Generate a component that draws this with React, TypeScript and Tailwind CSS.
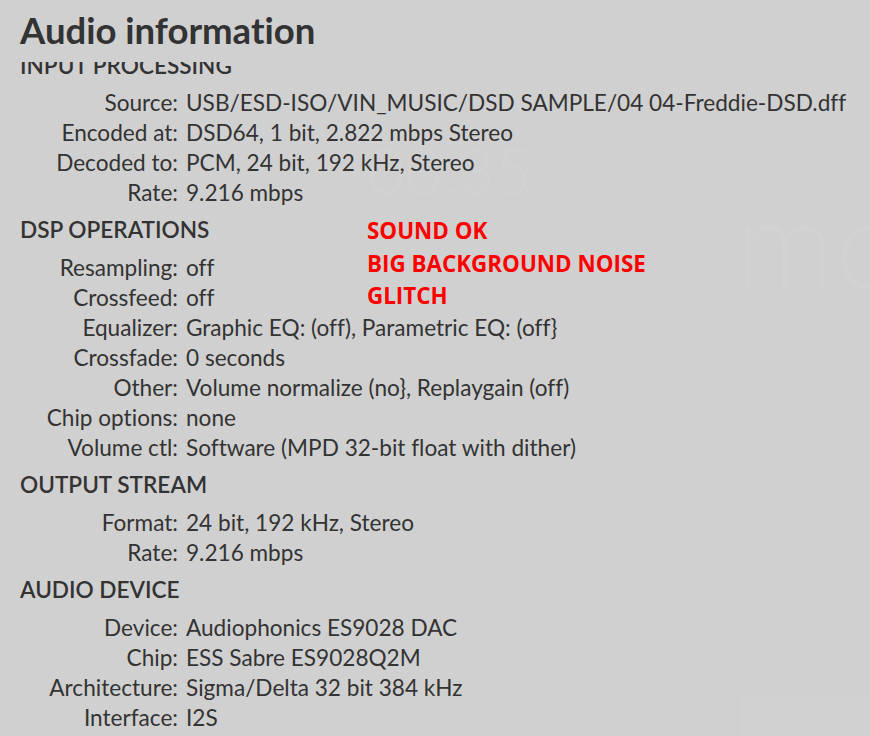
import React from "react";

type Row = [string, string];

const sections: { title: string; rows: Row[] }[] = [
  {
    title: "INPUT PROCESSING",
    rows: [
      ["Source:", "USB/ESD-ISO/VIN_MUSIC/DSD SAMPLE/04 04-Freddie-DSD.dff"],
      ["Encoded at:", "DSD64, 1 bit, 2.822 mbps Stereo"],
      ["Decoded to:", "PCM, 24 bit, 192 kHz, Stereo"],
      ["Rate:", "9.216 mbps"],
    ],
  },
  {
    title: "DSP OPERATIONS",
    rows: [
      ["Resampling:", "off"],
      ["Crossfeed:", "off"],
      ["Equalizer:", "Graphic EQ: (off), Parametric EQ: (off}"],
      ["Crossfade:", "0 seconds"],
      ["Other:", "Volume normalize (no}, Replaygain (off)"],
      ["Chip options:", "none"],
      ["Volume ctl:", "Software (MPD 32-bit float with dither)"],
    ],
  },
  {
    title: "OUTPUT STREAM",
    rows: [
      ["Format:", "24 bit, 192 kHz, Stereo"],
      ["Rate:", "9.216 mbps"],
    ],
  },
  {
    title: "AUDIO DEVICE",
    rows: [
      ["Device:", "Audiophonics ES9028 DAC"],
      ["Chip:", "ESS Sabre ES9028Q2M"],
      ["Architecture:", "Sigma/Delta 32 bit 384 kHz"],
      ["Interface:", "I2S"],
    ],
  },
];

export default function App() {
  return (
    <div
      className="relative w-[870px] h-[736px] overflow-hidden bg-[#d0d0d0] text-[#333333] [font-variant-ligatures:none]"
      style={{ fontFamily: "Lato, 'Open Sans', sans-serif" }}
    >
      {/* faint page behind the dimmed modal */}
      <div className="absolute inset-0 pointer-events-none text-white/[0.06] font-light">
        <div className="absolute left-[368px] top-[138px] text-[64px] leading-none">00:35</div>
        <div className="absolute left-[735px] top-[178px] text-[124px] leading-none">mo</div>
        <div className="absolute left-[0px] top-[630px] text-[20px] leading-none">You're</div>
        <div className="absolute left-[740px] top-[693px] w-[130px] h-[43px] bg-white/[0.03]" />
      </div>

      <div className="relative">
        <div className="h-[62px] pl-[20px] pt-[7px]">
          <h1 className="text-[36.5px] leading-[46px] font-bold">Audio information</h1>
        </div>

        <div className="h-[674px] overflow-hidden pl-[20px] text-[22.6px]">
          {sections.map((s, i) => (
            <div key={s.title}>
              <div
                className={
                  i === 0
                    ? "-mt-[11px] mb-[7px] h-[30px] leading-[30px] font-semibold"
                    : "mt-[7px] mb-[8px] h-[30px] leading-[30px] font-semibold"
                }
              >
                {s.title}
              </div>
              {s.rows.map(([k, v]) => (
                <div key={k + v} className="flex h-[30px] leading-[30px]">
                  <div className="w-[158px] shrink-0 text-right whitespace-nowrap">{k}</div>
                  <div className="pl-[8px] whitespace-nowrap">{v}</div>
                </div>
              ))}
            </div>
          ))}
        </div>
      </div>

      {/* annotation */}
      <div
        className="absolute left-[367px] top-[215px] text-[22.4px] leading-[32.5px] font-bold text-[#ff0000]"
        style={{ fontFamily: "'Open Sans', sans-serif" }}
      >
        <div>SOUND OK</div>
        <div>BIG BACKGROUND NOISE</div>
        <div>GLITCH</div>
      </div>
    </div>
  );
}
